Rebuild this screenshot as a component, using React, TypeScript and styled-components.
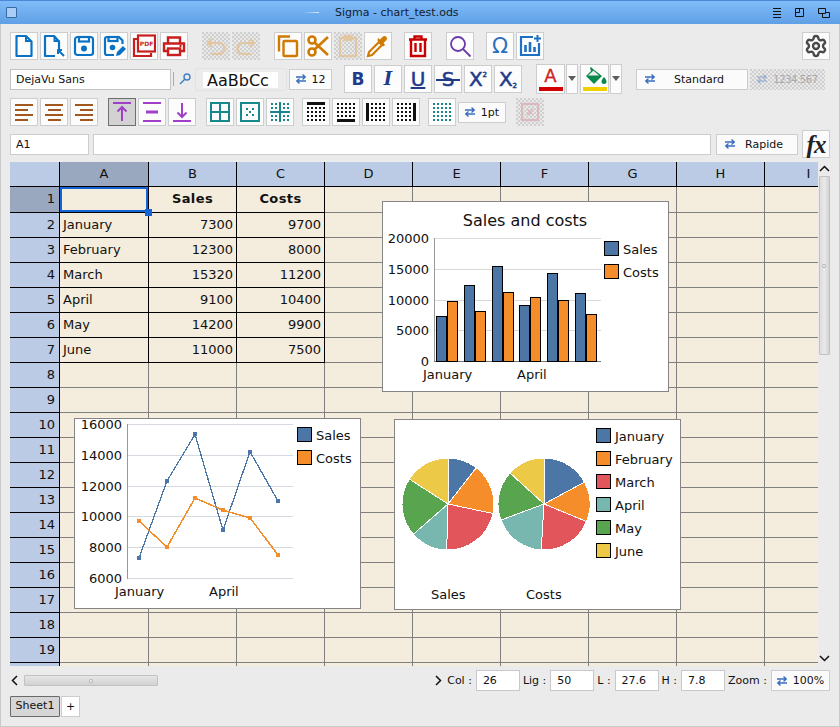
import React from "react";
import styled, { createGlobalStyle, css } from "styled-components";
import { Settings } from "lucide-react";

const FONT = `"DejaVu Sans", sans-serif`;

const GlobalStyle = createGlobalStyle`
    html, body { margin: 0; padding: 0; background: #ebebeb; }
    body { font-family: ${FONT}; font-size: 11px; color: #111; }
`;

/* ---- Data ---- */
const MONTHS = ["January", "February", "March", "April", "May", "June"];
const SALES = [7300, 12300, 15320, 9100, 14200, 11000];
const COSTS = [9700, 8000, 11200, 10400, 9900, 7500];
const COLUMNS = ["A", "B", "C", "D", "E", "F", "G", "H", "I"];
const ROW_COUNT = 20;

const BLUE = "#4c76a6";
const ORANGE = "#f58e2a";
const PIE_COLORS = [BLUE, ORANGE, "#e2565b", "#78b6b0", "#59a44f", "#edc948"];

/* ---- Small drawings ---- */
const Svg: React.FC<{ color: string; width?: number; children: React.ReactNode }> = ({ color, width = 2, children }) => (
    <svg width="24" height="24" viewBox="0 0 24 24" fill="none" stroke={color} strokeWidth={width}>
        {children}
    </svg>
);

const DOC_BLUE = "#0a72c4";
const TAN = "#e2c6a0";
const AMBER = "#d07a00";
const RED = "#c81e1e";
const BROWN = "#a2571f";
const PURPLE = "#a040c8";
const TEAL = "#17898a";

const NewIcon = () => (
    <Svg color={DOC_BLUE} width={2.2}>
        <path d="M4.500 2h9.500l5.500 5.500V22h-15z" strokeLinejoin="round" />
        <path d="M13 2h2v4h4v2h-6z" fill={DOC_BLUE} stroke="none" />
    </Svg>
);
const OpenIcon = () => (
    <Svg color={DOC_BLUE} width={2.2}>
        <path d="M13 22H3V2h9l5 5.500V15" strokeLinejoin="round" />
        <path d="M11.500 2h2v4h4v2h-6z" fill={DOC_BLUE} stroke="none" />
        <path d="M16 16l6 6M15.500 16h4.500M16 15.500V20" strokeWidth="2" />
    </Svg>
);
const SaveIcon = () => (
    <Svg color={DOC_BLUE} width={2.2}>
        <rect x="3" y="3" width="18" height="18" rx="2.500" />
        <rect x="7" y="3" width="10" height="4.500" />
        <circle cx="12" cy="14.500" r="3" fill={DOC_BLUE} stroke="none" />
    </Svg>
);
const SaveAsIcon = () => (
    <Svg color={DOC_BLUE} width={2.2}>
        <path d="M12 21H5a2 2 0 0 1-2-2V5a2 2 0 0 1 2-2h12l3.500 3.500V10" />
        <rect x="6.500" y="3" width="9" height="4" />
        <circle cx="10.500" cy="13.500" r="2.800" fill={DOC_BLUE} stroke="none" />
        <path d="M14 22l1-4 6-6 3 3-6 6z" fill={DOC_BLUE} stroke="none" />
    </Svg>
);
const PdfIcon = () => (
    <Svg color={RED} width={2.2}>
        <path d="M5 5H2v17h17v-3" />
        <rect x="6" y="1.500" width="17" height="16" />
        <text x="14.500" y="12" fontFamily={FONT} fontWeight="700" fontSize="6" textAnchor="middle" fill={RED} stroke="none">PDF</text>
    </Svg>
);
const PrintIcon = () => (
    <Svg color={RED} width={2.4}>
        <path d="M6 9V3.500h12V9" />
        <path d="M6 17H2V9.500h20V17h-4" />
        <rect x="6" y="14.500" width="12" height="6.500" />
        <path d="M17.500 12h2" />
    </Svg>
);
const UndoIcon = () => (
    <Svg color={TAN} width={2.2}>
        <path d="M8 5L4 9l4 4" />
        <path d="M4 9h11a4.500 4.500 0 0 1 0 11H7" />
    </Svg>
);
const RedoIcon = () => (
    <Svg color={TAN} width={2.2}>
        <path d="M16 5l4 4-4 4" />
        <path d="M20 9H9a4.500 4.500 0 0 0 0 11h8" />
    </Svg>
);
const CopyIcon = () => (
    <Svg color={AMBER} width={2.4}>
        <path d="M14 2.500H3v15" />
        <rect x="7.500" y="7" width="13.500" height="15" rx="1" />
    </Svg>
);
const CutIcon = () => (
    <Svg color={AMBER} width={2.6}>
        <circle cx="6" cy="6" r="3.500" />
        <circle cx="6" cy="18" r="3.500" />
        <path d="M8.500 8.500L22 21M8.500 15.500L22 3" />
    </Svg>
);
const PasteIcon = () => (
    <Svg color={TAN} width={2}>
        <rect x="4" y="4" width="16" height="18" />
        <rect x="8.500" y="2" width="7" height="4" />
    </Svg>
);
const PickerIcon = () => (
    <Svg color={AMBER} width={2.2}>
        <path d="M2 22l1-4L13 8l3 3L6 21z" />
        <path d="M11.500 6.500l6 6 1.500-1.500-1.500-2 3-3a2.500 2.500 0 0 0-3.500-3.500l-3 3-2-1.500z" fill={AMBER} stroke="none" />
    </Svg>
);
const TrashIcon = () => (
    <Svg color="#c80000" width={2.4}>
        <path d="M3 5.500h18M8.500 5V2.500h7V5" />
        <path d="M5 5.500V22h14V5.500" />
        <path d="M9.500 9v9M14.500 9v9" />
    </Svg>
);
const SearchIcon = () => (
    <Svg color="#6a3aa8" width={1.8}>
        <circle cx="10" cy="10" r="7" />
        <path d="M15 15l7.500 7.500" />
    </Svg>
);
const ChartIcon = () => (
    <Svg color="#1f70c0" width={2.2}>
        <path d="M15 3H3v18h18V9" />
        <path d="M7.500 11v7M12 8v10M16.500 13v5" strokeWidth="2.600" />
        <path d="M19.500 1v7M16 4.500h7" strokeWidth="2" />
    </Svg>
);
const BucketIcon = () => (
    <svg width="24" height="18" viewBox="0 0 24 18">
        <path d="M8 0l2 2L19 9l-8 8-8-8 5-5-1-3z" fill="#0a8a4a" />
        <path d="M5 8.500h11L10.500 3.500z" fill="#eee" />
        <path d="M21 10c1.500 2 2.500 3 2.500 4.500a2.500 2.500 0 0 1-5 0c0-1.500 1-2.500 2.500-4.500z" fill="#0a8a4a" />
    </svg>
);
const SmallSearch = () => (
    <svg width="12" height="12" viewBox="0 0 12 12" fill="none" stroke="#3f7fc8" strokeWidth="1.400">
        <circle cx="8" cy="4" r="3" />
        <path d="M6 6l-5 5" />
    </svg>
);
const SwapIcon = () => (
    <svg width="10" height="10" viewBox="0 0 10 10" fill="none" stroke="#3a6cc0" strokeWidth="1.300">
        <path d="M0 3h9M6.500 .5L9.200 3 6.500 5.500" />
        <path d="M10 7H1M3.500 4.500L.8 7l2.700 2.500" />
    </svg>
);

const AlignIcon: React.FC<{ kind: "left" | "center" | "right" }> = ({ kind }) => {
    const short = kind === "left" ? "M3 " : kind === "center" ? "M6 " : "M8 ";
    const d = `M3 5h18 ${short}10h13 M3 15h18 ${short}20h13`;
    return (
        <Svg color={BROWN} width={2}>
            <path d={d} />
        </Svg>
    );
};

const VTopIcon = () => (
    <Svg color={PURPLE} width={2}>
        <path d="M3 3h18M12 21V7M7.500 11.500L12 7l4.500 4.500" />
    </Svg>
);
const VMidIcon = () => (
    <Svg color={PURPLE} width={2}>
        <path d="M3 3h18M3 21h18" />
        <path d="M6 12h12" strokeWidth="3" />
    </Svg>
);
const VBottomIcon = () => (
    <Svg color={PURPLE} width={2}>
        <path d="M3 21h18M12 3v14M7.500 12.500L12 17l4.500-4.500" />
    </Svg>
);

type BorderSide = "outer" | "inner" | "top" | "bottom" | "left" | "right";

/* dotted grid with some edges drawn solid */
const BorderIcon: React.FC<{ sides: BorderSide[]; color: string }> = ({ sides, color }) => {
    const dots: React.ReactNode[] = [];
    [3, 7, 11, 15, 19].forEach((y) =>
        [3, 7, 11, 15, 19].forEach((x) =>
            dots.push(<rect key={`${x}-${y}`} x={x} y={y} width="2" height="2" fill={color} />)
        )
    );
    const has = (s: BorderSide) => sides.includes(s);
    const outerOnly = has("outer") && !has("inner");
    return (
        <svg width="24" height="24" viewBox="0 0 24 24">
            {dots}
            {has("outer") && <rect x="3" y="3" width="18" height="18" fill="#fcfcfc" stroke={color} strokeWidth="2" />}
            {outerOnly && <rect x="8" y="8" width="2" height="2" fill={color} />}
            {outerOnly && <rect x="14" y="8" width="2" height="2" fill={color} />}
            {outerOnly && <rect x="8" y="14" width="2" height="2" fill={color} />}
            {outerOnly && <rect x="14" y="14" width="2" height="2" fill={color} />}
            {outerOnly && <rect x="11" y="11" width="2" height="2" fill={color} />}
            {has("inner") && <path d="M12 2v20M2 12h20" stroke={color} strokeWidth="2" />}
            {has("top") && <rect x="3" y="2" width="18" height="3" fill={color} />}
            {has("bottom") && <rect x="3" y="19" width="18" height="3" fill={color} />}
            {has("left") && <rect x="2" y="3" width="3" height="18" fill={color} />}
            {has("right") && <rect x="19" y="3" width="3" height="18" fill={color} />}
        </svg>
    );
};

const Chevron: React.FC<{ dir: "up" | "down" | "left" | "right" }> = ({ dir }) => {
    const d = {
        up: "M1 7l4.500-4.500L10 7",
        down: "M1 3l4.500 4.500L10 3",
        left: "M7 1L2.500 5.500 7 10",
        right: "M3 1l4.500 4.500L3 10",
    }[dir];
    return (
        <svg width="11" height="11" viewBox="0 0 11 11" fill="none" stroke="#111" strokeWidth="1.500">
            <path d={d} />
        </svg>
    );
};

/* ---- Charts ---- */
const ChartText = styled.text<{ $size?: number }>`
    font-family: ${FONT};
    font-size: ${({ $size }) => $size ?? 13}px;
    fill: #111;
`;

const Swatch: React.FC<{ x: number; y: number; color: string; label: string }> = ({ x, y, color, label }) => (
    <g>
        <rect x={x + 0.5} y={y + 0.5} width="14" height="14" fill={color} stroke="#000" />
        <ChartText x={x + 19} y={y + 13}>{label}</ChartText>
    </g>
);

const BarChart = () => {
    const bottom = 361;
    const scale = (v: number) => (v / 20000) * 123;
    const starts = [436, 464, 492, 519, 547, 575];
    return (
        <ChartFrame $left={372} $top={39} $height={191}>
            <svg width="285" height="189" viewBox="383 202 285 189">
                <ChartText $size={16} x={525} y={226} textAnchor="middle">Sales and costs</ChartText>
                {[0, 5000, 10000, 15000, 20000].map((v) => (
                    <g key={v}>
                        <line x1="434" x2="601" y1={Math.round(bottom - scale(v)) + 0.5} y2={Math.round(bottom - scale(v)) + 0.5} stroke={v ? "#d9d9d9" : "#777"} />
                        <ChartText x={429} y={bottom - scale(v) + 5} textAnchor="end">{v}</ChartText>
                    </g>
                ))}
                <line x1="434.500" x2="434.500" y1="238" y2="361" stroke="#999" />
                {starts.map((x, i) => (
                    <g key={x}>
                        <rect x={x + 0.5} y={Math.floor(bottom - scale(SALES[i])) + 0.5} width="10" height={Math.ceil(scale(SALES[i]))} fill={BLUE} stroke="#000" />
                        <rect x={x + 11.5} y={Math.floor(bottom - scale(COSTS[i])) + 0.5} width="10" height={Math.ceil(scale(COSTS[i]))} fill={ORANGE} stroke="#000" />
                    </g>
                ))}
                <ChartText x={423} y={379}>January</ChartText>
                <ChartText x={517} y={379}>April</ChartText>
                <Swatch x={604} y={241} color={BLUE} label="Sales" />
                <Swatch x={604} y={264} color={ORANGE} label="Costs" />
            </svg>
        </ChartFrame>
    );
};

const LineChart = () => {
    const xs = [139, 167, 195, 223, 250, 278];
    const y = (v: number) => 578 - ((v - 6000) / 10000) * 154;
    const series = (values: number[], color: string, width: number) => (
        <g>
            <polyline
                points={values.map((v, i) => `${xs[i]},${y(v)}`).join(" ")}
                fill="none"
                stroke={color}
                strokeWidth={width}
                shapeRendering="crispEdges"
            />
            {values.map((v, i) => (
                <rect key={i} x={xs[i] - 2} y={Math.round(y(v)) - 2} width="4" height="4" fill={color} />
            ))}
        </g>
    );
    return (
        <ChartFrame $left={64} $top={256} $height={191}>
            <svg width="285" height="189" viewBox="75 419 285 189">
                {[6000, 8000, 10000, 12000, 14000, 16000].map((v) => (
                    <g key={v}>
                        <line x1="127" x2="293" y1={Math.round(y(v)) + 0.5} y2={Math.round(y(v)) + 0.5} stroke="#d6d9e0" />
                        <ChartText x={122} y={y(v) + 5} textAnchor="end">{v}</ChartText>
                    </g>
                ))}
                <line x1="127.500" x2="127.500" y1="424" y2="579" stroke="#999" />
                {series(SALES, BLUE, 1.3)}
                {series(COSTS, ORANGE, 1.5)}
                <ChartText x={115} y={596}>January</ChartText>
                <ChartText x={209} y={596}>April</ChartText>
                <Swatch x={297} y={427} color={BLUE} label="Sales" />
                <Swatch x={297} y={450} color={ORANGE} label="Costs" />
            </svg>
        </ChartFrame>
    );
};

const Pie: React.FC<{ cx: number; cy: number; values: number[] }> = ({ cx, cy, values }) => {
    const total = values.reduce((a, b) => a + b, 0);
    const r = 46;
    let angle = -Math.PI / 2;
    return (
        <g shapeRendering="crispEdges">
            {values.map((v, i) => {
                const next = angle + (v / total) * Math.PI * 2;
                const d = `M${cx} ${cy}L${cx + r * Math.cos(angle)} ${cy + r * Math.sin(angle)}A${r} ${r} 0 ${next - angle > Math.PI ? 1 : 0} 1 ${cx + r * Math.cos(next)} ${cy + r * Math.sin(next)}Z`;
                angle = next;
                return <path key={i} d={d} fill={PIE_COLORS[i]} stroke="#fff" strokeWidth="1" />;
            })}
        </g>
    );
};

const PieChart = () => (
    <ChartFrame $left={384} $top={257} $height={191}>
        <svg width="285" height="189" viewBox="395 420 285 189">
            <Pie cx={448} cy={504} values={SALES} />
            <Pie cx={544} cy={504} values={COSTS} />
            {MONTHS.map((m, i) => (
                <Swatch key={m} x={596} y={428 + i * 23} color={PIE_COLORS[i]} label={m} />
            ))}
            <ChartText x={431} y={599}>Sales</ChartText>
            <ChartText x={526} y={599}>Costs</ChartText>
        </svg>
    </ChartFrame>
);

/* ---- Page ---- */
const tableCell = (row: number, col: number): string => {
    if (col > 2 || row > 7) return "";
    if (row === 1) return ["", "Sales", "Costs"][col];
    return col === 0 ? MONTHS[row - 2] : String((col === 1 ? SALES : COSTS)[row - 2]);
};

export default function App() {
    const rows = Array.from({ length: ROW_COUNT }, (_, i) => i + 1);
    return (
        <Page>
            <GlobalStyle />
            <TitleBar>
                <WindowBox />
                <TitleMark />
                <Title>Sigma - chart_test.ods</Title>
                <WindowButtons>
                    <svg width="12" height="12" viewBox="0 0 12 12" stroke="#111" strokeWidth="1"><path d="M2 1.500h8M2 4.500h8M2 7.500h8M2 10.500h8" /></svg>
                    <svg width="12" height="12" viewBox="0 0 12 12" stroke="#111" fill="none"><path d="M1.500 1.500h8v8h-8zM1.500 5.500h4M5.500 1.500v4" /></svg>
                    <svg width="14" height="12" viewBox="0 0 14 12" stroke="#111" fill="none"><path d="M1.500 1.500h7v5h-7zM5.500 6.500v4h7v-5h-4" /></svg>
                </WindowButtons>
            </TitleBar>

            <Body>
                {/* --- FILE / EDIT TOOLS --- */}
                <ToolRow>
                    <ToolGroup>
                        <IconButton title="New"><NewIcon /></IconButton>
                        <IconButton title="Open"><OpenIcon /></IconButton>
                        <IconButton title="Save"><SaveIcon /></IconButton>
                        <IconButton title="Save as"><SaveAsIcon /></IconButton>
                        <IconButton title="Export PDF"><PdfIcon /></IconButton>
                        <IconButton title="Print"><PrintIcon /></IconButton>
                    </ToolGroup>
                    <ToolGroup $gap={14}>
                        <IconButton $disabled><UndoIcon /></IconButton>
                        <IconButton $disabled><RedoIcon /></IconButton>
                    </ToolGroup>
                    <ToolGroup $gap={14}>
                        <IconButton><CopyIcon /></IconButton>
                        <IconButton><CutIcon /></IconButton>
                        <IconButton $disabled><PasteIcon /></IconButton>
                        <IconButton><PickerIcon /></IconButton>
                    </ToolGroup>
                    <ToolGroup $gap={12}>
                        <IconButton><TrashIcon /></IconButton>
                    </ToolGroup>
                    <ToolGroup $gap={14}>
                        <IconButton><SearchIcon /></IconButton>
                    </ToolGroup>
                    <ToolGroup $gap={12}>
                        <IconButton><OmegaGlyph>Ω</OmegaGlyph></IconButton>
                        <IconButton><ChartIcon /></IconButton>
                    </ToolGroup>
                    <GearSlot>
                        <IconButton><Settings size={24} strokeWidth={2.4} color="#4a4a4a" /></IconButton>
                    </GearSlot>
                </ToolRow>

                {/* --- FONT TOOLS --- */}
                <ToolRow>
                    <FontInput>DejaVu Sans</FontInput>
                    <FontSep />
                    <SearchSlot><SmallSearch /></SearchSlot>
                    <Preview><PreviewText>AaBbCc</PreviewText></Preview>
                    <SwapButton $width={43}><SwapIcon />12</SwapButton>
                    <ToolGroup $gap={12}>
                        <IconButton><BoldGlyph>B</BoldGlyph></IconButton>
                        <IconButton><ItalicGlyph>I</ItalicGlyph></IconButton>
                        <IconButton><StyleGlyph $underline>U</StyleGlyph></IconButton>
                        <IconButton><StyleGlyph>S<StrikeLine /></StyleGlyph></IconButton>
                        <IconButton><StyleGlyph>X<Sup>2</Sup></StyleGlyph></IconButton>
                        <IconButton><StyleGlyph>X<Sub>2</Sub></StyleGlyph></IconButton>
                    </ToolGroup>
                    <ToolGroup $gap={14}>
                        <ColorButton>
                            <ColorLetter>A</ColorLetter>
                            <ColorBar $color="#d00000" />
                        </ColorButton>
                        <DropArrow />
                        <ColorButton>
                            <BucketIcon />
                            <ColorBar $color="#f2d000" />
                        </ColorButton>
                        <DropArrow />
                    </ToolGroup>
                    <SwapButton $width={112} $left={14} $spread><SwapIcon /><SwapLabel>Standard</SwapLabel></SwapButton>
                    <SwapButton $width={75} $left={2} $disabled><SwapIcon />1234.567</SwapButton>
                </ToolRow>

                {/* --- ALIGN / BORDER TOOLS --- */}
                <ToolRow>
                    <ToolGroup>
                        <IconButton><AlignIcon kind="left" /></IconButton>
                        <IconButton><AlignIcon kind="center" /></IconButton>
                        <IconButton><AlignIcon kind="right" /></IconButton>
                    </ToolGroup>
                    <ToolGroup $gap={10}>
                        <IconButton $active><VTopIcon /></IconButton>
                        <IconButton><VMidIcon /></IconButton>
                        <IconButton><VBottomIcon /></IconButton>
                    </ToolGroup>
                    <ToolGroup $gap={10}>
                        <IconButton><BorderIcon sides={["outer", "inner"]} color={TEAL} /></IconButton>
                        <IconButton><BorderIcon sides={["outer"]} color={TEAL} /></IconButton>
                        <IconButton><BorderIcon sides={["inner"]} color={TEAL} /></IconButton>
                    </ToolGroup>
                    <ToolGroup $gap={8}>
                        <IconButton><BorderIcon sides={["top"]} color="#111" /></IconButton>
                        <IconButton><BorderIcon sides={["bottom"]} color="#111" /></IconButton>
                        <IconButton><BorderIcon sides={["left"]} color="#111" /></IconButton>
                        <IconButton><BorderIcon sides={["right"]} color="#111" /></IconButton>
                    </ToolGroup>
                    <ToolGroup $gap={8}>
                        <IconButton><BorderIcon sides={[]} color={TEAL} /></IconButton>
                    </ToolGroup>
                    <SwapButton $width={48} $left={2}><SwapIcon />1pt</SwapButton>
                    <ToolGroup $gap={10}>
                        <IconButton $disabled>
                            <svg width="24" height="24" viewBox="0 0 24 24" fill="none" stroke="#dcb8bc" strokeWidth="2">
                                <rect x="4" y="4" width="16" height="16" />
                                <path d="M9 9l3 3-3 3M15 9l-3 3 3 3" strokeWidth="1.500" />
                            </svg>
                        </IconButton>
                    </ToolGroup>
                </ToolRow>

                {/* --- FORMULA ROW --- */}
                <FormulaRow>
                    <CellName>A1</CellName>
                    <FormulaInput />
                    <SwapButton $width={82} $spread><SwapIcon /><SwapLabel>Rapide</SwapLabel></SwapButton>
                    <FxButton>fx</FxButton>
                </FormulaRow>

                {/* --- SHEET --- */}
                <SheetRow>
                    <Sheet>
                        <SheetGrid>
                            <ColHead />
                            {COLUMNS.map((c) => (
                                <ColHead key={c} $selected={c === "A"}>{c}</ColHead>
                            ))}
                            {rows.map((row) => (
                                <React.Fragment key={row}>
                                    {/* last row is cut by the sheet edge before its number shows */}
                                    <RowHead $selected={row === 1}>{row < ROW_COUNT ? row : ""}</RowHead>
                                    {COLUMNS.map((c, col) => {
                                        const text = tableCell(row, col);
                                        const inTable = row <= 7 && col <= 2;
                                        return (
                                            <Cell
                                                key={c}
                                                $table={inTable}
                                                $bold={row === 1 && col > 0}
                                                $numeric={row > 1 && col > 0 && col <= 2}
                                                $center={row === 1}
                                            >
                                                {text}
                                                {row === 1 && col === 0 && <ActiveCell><FillHandle /></ActiveCell>}
                                            </Cell>
                                        );
                                    })}
                                </React.Fragment>
                            ))}
                        </SheetGrid>
                        <BarChart />
                        <LineChart />
                        <PieChart />
                    </Sheet>
                    <VScroll>
                        <ArrowSlot $height={14}><Chevron dir="up" /></ArrowSlot>
                        <VTrack><Grip /></VTrack>
                        <ArrowSlot $height={16} $end><Chevron dir="down" /></ArrowSlot>
                    </VScroll>
                </SheetRow>

                {/* --- STATUS ROW --- */}
                <StatusRow>
                    <ArrowSlot $height={21}><Chevron dir="left" /></ArrowSlot>
                    <HTrack><Grip /></HTrack>
                    <StatusRight>
                        <ArrowSlot $height={21}><Chevron dir="right" /></ArrowSlot>
                        <FieldLabel>Col :</FieldLabel>
                        <FieldBox>26</FieldBox>
                        <FieldLabel>Lig :</FieldLabel>
                        <FieldBox>50</FieldBox>
                        <FieldLabel>L :</FieldLabel>
                        <FieldBox>27.6</FieldBox>
                        <FieldLabel>H :</FieldLabel>
                        <FieldBox>7.8</FieldBox>
                        <FieldLabel>Zoom :</FieldLabel>
                        <SwapButton $width={59} $left={0}><SwapIcon />100%</SwapButton>
                    </StatusRight>
                </StatusRow>

                {/* --- TABS --- */}
                <TabRow>
                    <SheetTab>Sheet1</SheetTab>
                    <AddTab>+</AddTab>
                </TabRow>
            </Body>
        </Page>
    );
}

/* ---- Window ---- */
const Page = styled.div`
    width: 840px;
    height: 727px;
    overflow: hidden;
    display: flex;
    flex-direction: column;
    background: #ebebeb;
`;

const TitleBar = styled.div`
    height: 24px;
    flex: none;
    box-sizing: border-box;
    display: flex;
    align-items: center;
    padding: 0 9px 0 6px;
    border-top: 1px solid #4a88d6;
    background: linear-gradient(#7fbcf9, #5f9fe6);
`;

const WindowBox = styled.div`
    width: 9px;
    height: 9px;
    border: 1px solid #3d6a9e;
    border-radius: 1px;
    background: #a9cdf7;
`;

const TitleMark = styled.div`
    width: 17px;
    height: 1px;
    margin-left: 285px;
    margin-top: -1px;
    background: linear-gradient(90deg, #6aa8ec, #dbeaff);
`;

const Title = styled.div`
    margin-left: 16px;
    font-size: 11px;
    color: #15202e;
`;

const WindowButtons = styled.div`
    margin-left: auto;
    display: flex;
    align-items: center;
    gap: 11px;
`;

const Body = styled.div`
    flex: 1;
    min-height: 0;
    box-sizing: border-box;
    padding: 8px 9px 0 9px;
    border: 1px solid #c9c9c9;
    border-top: none;
`;

/* ---- Toolbars ---- */
const ToolRow = styled.div`
    display: flex;
    align-items: center;
    height: 28px;
    margin-bottom: 5px;
`;

const ToolGroup = styled.div<{ $gap?: number }>`
    display: flex;
    align-items: center;
    gap: 2px;
    margin-left: ${({ $gap }) => $gap ?? 0}px;
`;

const GearSlot = styled.div`
    margin-left: auto;
`;

const disabledFill = css`
    background-color: #e9e9e9;
    background-image:
        radial-gradient(#b2b2b2 0.6px, transparent 0.8px),
        radial-gradient(#b2b2b2 0.6px, transparent 0.8px);
    background-size: 4px 4px;
    background-position: 0 0, 2px 2px;
`;

const IconButton = styled.div<{ $disabled?: boolean; $active?: boolean }>`
    width: 28px;
    height: 28px;
    box-sizing: border-box;
    display: flex;
    align-items: center;
    justify-content: center;
    border: 1px solid #cdcdcd;
    background: #fcfcfc;
    ${({ $disabled }) => $disabled && css`
        ${disabledFill};
        border-color: transparent;
    `}
    ${({ $active }) => $active && css`
        background: #d2d2d2;
        border-color: #6e6e6e;
    `}
`;

const OmegaGlyph = styled.span`
    font-size: 21px;
    line-height: 1;
    color: #2a70bc;
`;

const StyleGlyph = styled.span<{ $underline?: boolean }>`
    position: relative;
    font-size: 20px;
    line-height: 1;
    color: #1f3a8a;
    text-decoration: ${({ $underline }) => ($underline ? "underline" : "none")};
    -webkit-text-stroke: 0.5px #1f3a8a;
`;

const BoldGlyph = styled.span`
    font-size: 17px;
    font-weight: 700;
    line-height: 1;
    color: #1f3a8a;
`;

const ItalicGlyph = styled.span`
    font-family: "DejaVu Serif", serif;
    font-size: 18px;
    font-weight: 700;
    font-style: italic;
    line-height: 1;
    color: #1f3a8a;
`;

/* the strike runs wider than the letter */
const StrikeLine = styled.span`
    position: absolute;
    left: -6px;
    right: -6px;
    top: 10px;
    height: 2px;
    background: #1f3a8a;
`;

const Sup = styled.span`
    font-size: 7px;
    vertical-align: 9px;
`;

const Sub = styled.span`
    font-size: 7px;
    vertical-align: -2px;
`;

const FontInput = styled.div`
    width: 161px;
    height: 21px;
    box-sizing: border-box;
    padding: 0 0 0 5px;
    line-height: 19px;
    background: #fff;
    border: 1px solid #c4c4c4;
`;

const FontSep = styled.div`
    width: 1px;
    height: 14px;
    margin-left: 2px;
    background: #8fb2dc;
`;

const SearchSlot = styled.div`
    width: 21px;
    height: 14px;
    display: flex;
    align-items: center;
    justify-content: center;
`;

const Preview = styled.div`
    width: 92px;
    height: 23px;
    box-sizing: border-box;
    padding: 3px 8px 3px 7px;
    border: 1px solid #e2e2e2;
    border-radius: 3px;
`;

const PreviewText = styled.div`
    height: 16px;
    background: #fff;
    padding-left: 4px;
    font-size: 16px;
    line-height: 17px;
    white-space: nowrap;
`;

const SwapButton = styled.div<{ $width: number; $left?: number; $spread?: boolean; $disabled?: boolean }>`
    width: ${({ $width }) => $width}px;
    height: 21px;
    flex: none;
    box-sizing: border-box;
    margin-left: ${({ $left }) => $left ?? 2}px;
    display: flex;
    align-items: center;
    justify-content: center;
    gap: 6px;
    padding: ${({ $spread }) => ($spread ? "0 10px 0 8px" : "0")};
    font-size: 11px;
    background: #fbfbfb;
    border: 1px solid #cdcdcd;
    white-space: nowrap;
    svg { flex: none; }
    ${({ $disabled }) => $disabled && css`
        ${disabledFill};
        border-color: transparent;
        color: #a8a8a8;
        font-size: 10px;
        letter-spacing: -0.4px;
        svg { opacity: 0.35; }
    `}
`;

const SwapLabel = styled.span`
    flex: 1;
    text-align: center;
`;

const ColorButton = styled.div`
    width: 29px;
    height: 30px;
    margin: -1px 0;
    box-sizing: border-box;
    display: flex;
    flex-direction: column;
    align-items: center;
    justify-content: flex-end;
    padding: 0 1px 2px;
    gap: 2px;
    background: #fcfcfc;
    border: 1px solid #cdcdcd;
`;

const ColorLetter = styled.span`
    font-size: 18px;
    line-height: 19px;
    color: #cc2222;
    -webkit-text-stroke: 0.3px #cc2222;
`;

const ColorBar = styled.div<{ $color: string }>`
    width: 24px;
    height: 4px;
    flex: none;
    background: ${({ $color }) => $color};
`;

const DropArrow = styled.div`
    width: 12px;
    height: 30px;
    margin: -1px 0 -1px -1px;
    box-sizing: border-box;
    display: flex;
    align-items: center;
    justify-content: center;
    background: #fcfcfc;
    border: 1px solid #cdcdcd;
    &::after {
        content: "";
        margin-top: -2px;
        border-left: 4px solid transparent;
        border-right: 4px solid transparent;
        border-top: 5px solid #5c5c5c;
    }
`;

/* ---- Formula row ---- */
const FormulaRow = styled.div`
    display: flex;
    align-items: center;
    height: 28px;
    margin: -1px 0 4px;
`;

const CellName = styled.div`
    width: 79px;
    height: 21px;
    box-sizing: border-box;
    padding-left: 5px;
    line-height: 19px;
    background: #fff;
    border: 1px solid #cdcdcd;
`;

const FormulaInput = styled.div`
    width: 618px;
    height: 21px;
    box-sizing: border-box;
    margin: 0 3px 0 4px;
    background: #fff;
    border: 1px solid #cdcdcd;
`;

const FxButton = styled.div`
    width: 28px;
    height: 28px;
    margin-left: 4px;
    box-sizing: border-box;
    display: flex;
    align-items: center;
    justify-content: center;
    border: 1px solid #cdcdcd;
    background: #fcfcfc;
    font-family: "Liberation Serif", serif;
    font-style: italic;
    font-weight: 700;
    font-size: 25px;
    letter-spacing: -1px;
    line-height: 1;
    color: #222;
`;

/* ---- Sheet ---- */
const SheetRow = styled.div`
    display: flex;
    height: 504px;
`;

const Sheet = styled.div`
    position: relative;
    width: 808px;
    height: 504px;
    overflow: hidden;
`;

const SheetGrid = styled.div`
    display: grid;
    grid-template-columns: 50px 89px repeat(8, 88px);
    grid-template-rows: 25px 26px repeat(${ROW_COUNT - 1}, 25px);
    font-size: 13px;
`;

const headCell = css`
    box-sizing: border-box;
    border-right: 1px solid #000;
    border-bottom: 1px solid #000;
    line-height: 24px;
    color: #111;
`;

const ColHead = styled.div<{ $selected?: boolean }>`
    ${headCell};
    text-align: center;
    background: ${({ $selected }) => ($selected ? "#9aa8bf" : "#bbcbe5")};
`;

const RowHead = styled.div<{ $selected?: boolean }>`
    ${headCell};
    text-align: right;
    padding-right: 4px;
    background: ${({ $selected }) => ($selected ? "#9aa8bf" : "#bbcbe5")};
`;

const Cell = styled.div<{ $table?: boolean; $bold?: boolean; $numeric?: boolean; $center?: boolean }>`
    position: relative;
    box-sizing: border-box;
    padding: 0 3px;
    line-height: 24px;
    white-space: nowrap;
    background: #f4ecdc;
    border-right: 1px solid ${({ $table }) => ($table ? "#000" : "#808080")};
    border-bottom: 1px solid ${({ $table }) => ($table ? "#000" : "#808080")};
    font-weight: ${({ $bold }) => ($bold ? 700 : 400)};
    letter-spacing: ${({ $bold }) => ($bold ? "0.4px" : "0")};
    text-align: ${({ $numeric, $center }) => ($center ? "center" : $numeric ? "right" : "left")};
`;

const ActiveCell = styled.div`
    position: absolute;
    inset: 0;
    border: 2px solid #1464d8;
`;

const FillHandle = styled.div`
    position: absolute;
    right: -6px;
    bottom: -6px;
    width: 7px;
    height: 7px;
    background: #1464d8;
    z-index: 1;
`;

const ChartFrame = styled.div<{ $left: number; $top: number; $height: number }>`
    position: absolute;
    left: ${({ $left }) => $left}px;
    top: ${({ $top }) => $top}px;
    width: 287px;
    height: ${({ $height }) => $height}px;
    box-sizing: border-box;
    background: #fff;
    border: 1px solid #858585;
    svg { display: block; overflow: visible; }
`;

/* ---- Scrollbars ---- */
const VScroll = styled.div`
    width: 12px;
    height: 504px;
    display: flex;
    flex-direction: column;
    align-items: center;
`;

const ArrowSlot = styled.div<{ $height: number; $end?: boolean }>`
    height: ${({ $height }) => $height}px;
    width: 11px;
    flex: none;
    display: flex;
    align-items: center;
    justify-content: center;
    margin-top: ${({ $end }) => ($end ? "auto" : "0")};
`;

const scrollTrack = css`
    box-sizing: border-box;
    display: flex;
    align-items: center;
    justify-content: center;
    border: 1px solid #c2c2c2;
    border-radius: 1px;
`;

const VTrack = styled.div`
    ${scrollTrack};
    width: 11px;
    height: 179px;
    background: linear-gradient(90deg, #dcdcdc, #e9e9e9 50%, #d2d2d2);
`;

const HTrack = styled.div`
    ${scrollTrack};
    width: 134px;
    height: 11px;
    margin-left: 3px;
    background: linear-gradient(#e6e6e6, #d2d2d2);
`;

const Grip = styled.div`
    width: 2px;
    height: 2px;
    border-radius: 50%;
    background: #fafafa;
    box-shadow: 0 0 0 1px #b4b4b4;
`;

/* ---- Status ---- */
const StatusRow = styled.div`
    display: flex;
    align-items: center;
    height: 21px;
    margin-top: 4px;
`;

const StatusRight = styled.div`
    margin-left: auto;
    display: flex;
    align-items: center;
`;

const FieldLabel = styled.span`
    margin: 0 4px 0 3px;
    font-size: 11px;
    white-space: nowrap;
`;

const FieldBox = styled.div`
    width: 44px;
    height: 21px;
    box-sizing: border-box;
    padding-left: 6px;
    line-height: 19px;
    background: #fff;
    border: 1px solid #c8c8c8;
`;

/* ---- Tabs ---- */
const TabRow = styled.div`
    display: flex;
    align-items: center;
    gap: 1px;
    margin-top: 5px;
`;

const SheetTab = styled.div`
    width: 50px;
    height: 21px;
    box-sizing: border-box;
    text-align: center;
    line-height: 18px;
    background: #d6d6d6;
    border: 1px solid #6a6a6a;
    border-radius: 1px;
`;

const AddTab = styled.div`
    width: 19px;
    height: 21px;
    box-sizing: border-box;
    text-align: center;
    line-height: 19px;
    background: #fff;
    border: 1px solid #cdcdcd;
`;
